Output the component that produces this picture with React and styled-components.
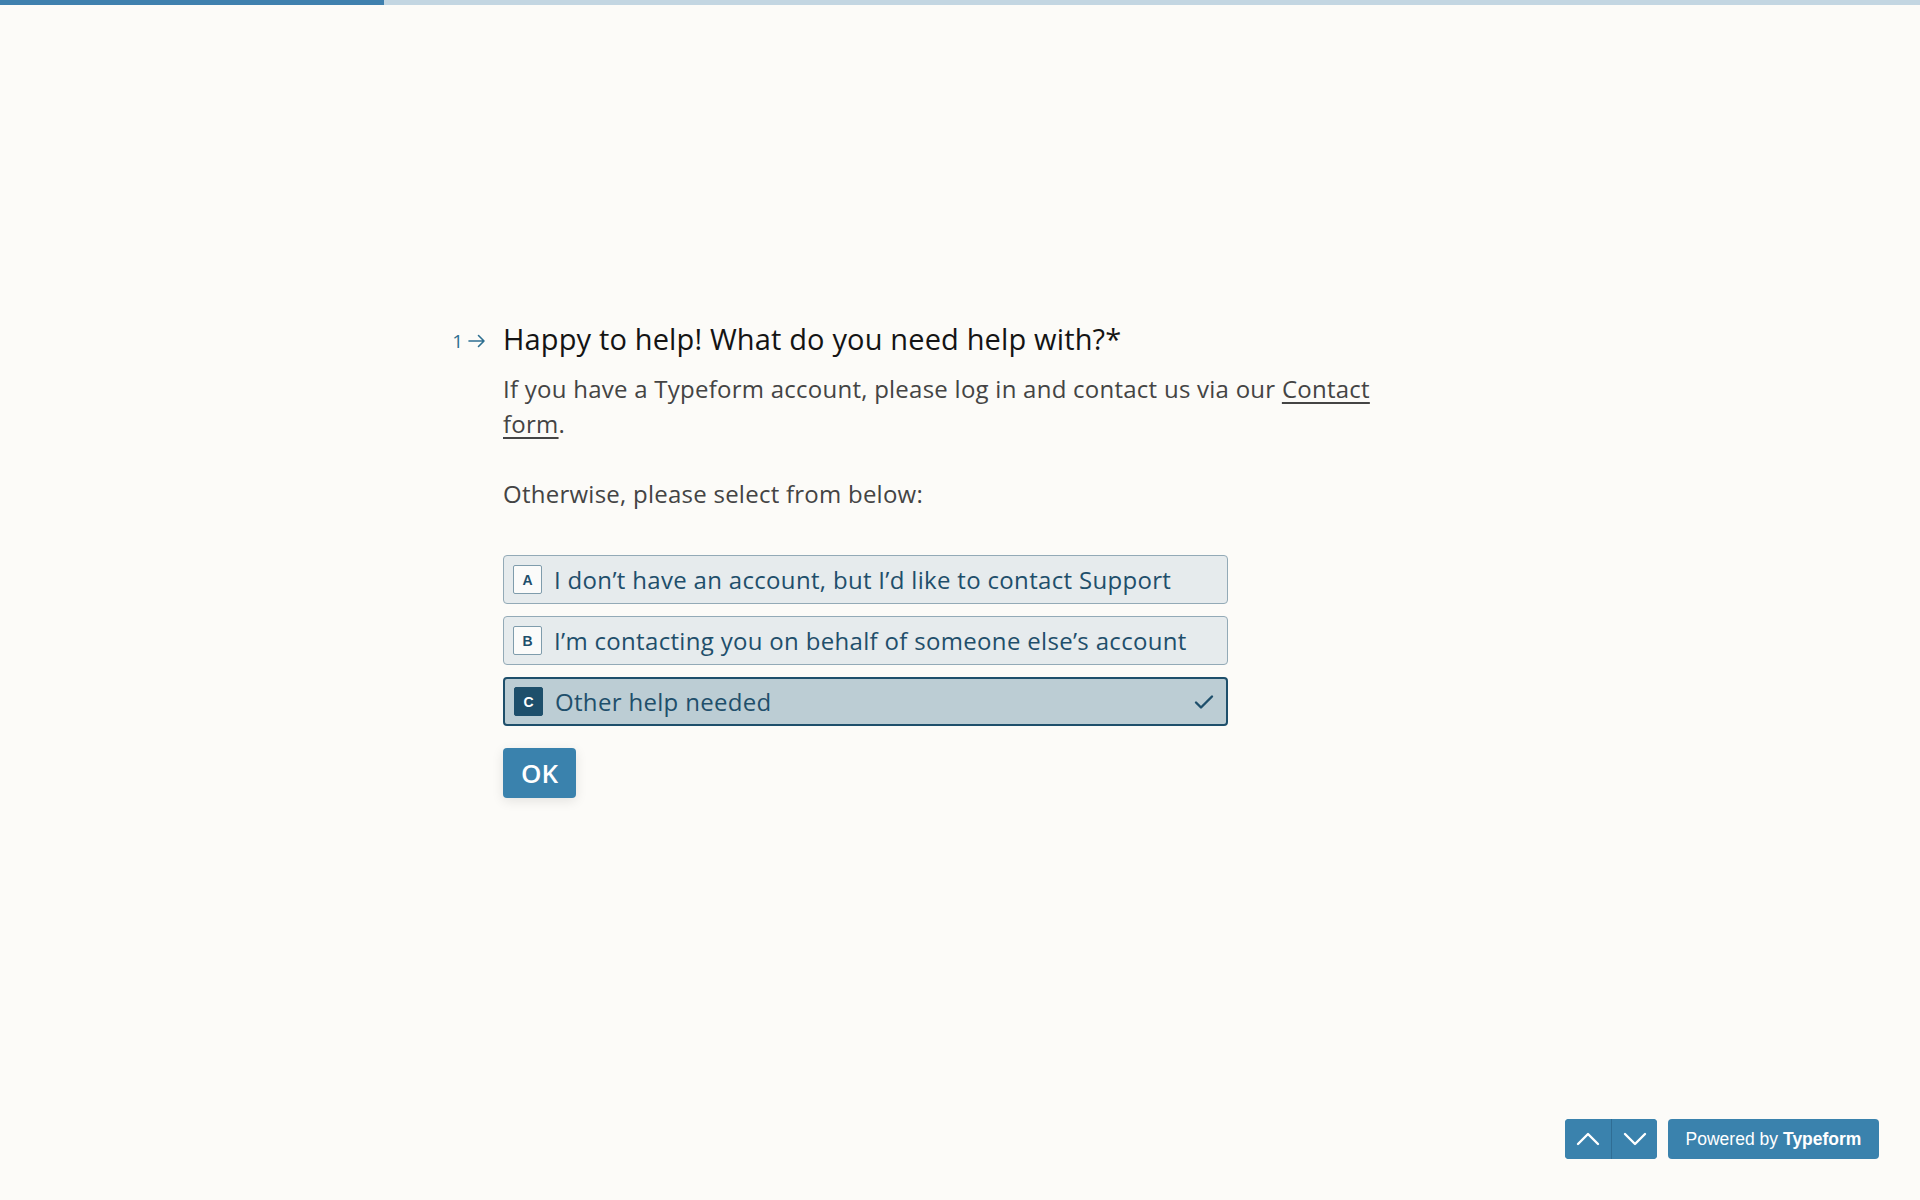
import React from "react";
import styled, { createGlobalStyle } from "styled-components";

const GlobalStyle = createGlobalStyle`
    html, body {
        margin: 0;
        padding: 0;
        background: #fcfbf8;
    }
    body {
        font-family: "Open Sans", "Noto Sans", sans-serif;
        -webkit-font-smoothing: antialiased;
    }
`;

const Page = styled.div`
    position: relative;
    height: 1200px;
    background: #fcfbf8;
    overflow: hidden;
`;

const Progress = styled.div`
    height: 5px;
    background: #c3d6e2;
    display: flex;
`;

const ProgressFill = styled.div`
    height: 100%;
    background: #3f80ae;
`;

const Column = styled.div`
    width: 1016px;
    margin: 0 auto;
    padding-top: 316px;
    display: flex;
    align-items: flex-start;
`;

const Counter = styled.div`
    width: 51px;
    flex-shrink: 0;
    display: flex;
    align-items: center;
    justify-content: flex-end;
    gap: 5px;
    padding-right: 17px;
    box-sizing: border-box;
    height: 36px;
    padding-top: 4px;
    color: #2e6f91;
    font-size: 19px;
`;

const Body = styled.div`
    flex: 1;
    max-width: 900px;
`;

const Title = styled.h1`
    margin: 0;
    font-size: 29px;
    line-height: 36px;
    font-weight: 400;
    color: #141414;
    letter-spacing: 0.15px;
`;

const Description = styled.div`
    margin-top: 14px;
    font-size: 24px;
    line-height: 35px;
    letter-spacing: 0.25px;
    color: #444444;
    p {
        margin: 0;
    }
    a {
        color: #444444;
        text-decoration: underline;
        text-underline-offset: 4px;
        text-decoration-thickness: 1.5px;
    }
`;

const Choices = styled.div`
    margin-top: 44px;
    width: 725px;
    display: flex;
    flex-direction: column;
    gap: 12px;
`;

const Choice = styled.div`
    height: 49px;
    box-sizing: border-box;
    display: flex;
    align-items: center;
    padding: 0 12px 0 9px;
    border-radius: 4px;
    border: ${p => p.selected ? "2px solid #1e4f6b" : "1px solid #93aab7"};
    background: ${p => p.selected ? "#bccdd4" : "#e6ebed"};
    color: #1f4f6b;
    font-size: 24px;
    letter-spacing: 0.32px;
    gap: 12px;
`;

const Key = styled.span`
    width: 29px;
    height: 29px;
    box-sizing: border-box;
    border-radius: 2px;
    display: flex;
    align-items: center;
    justify-content: center;
    font-size: 14px;
    font-weight: 700;
    letter-spacing: 0;
    font-family: "Liberation Sans", Arial, sans-serif;
    border: 1px solid ${p => p.selected ? "#1e4f6b" : "#7f9cac"};
    background: ${p => p.selected ? "#1e4f6b" : "#fbfbfa"};
    color: ${p => p.selected ? "#ffffff" : "#1e4f6b"};
`;

const Label = styled.span`
    flex: 1;
    white-space: nowrap;
`;

const Check = styled.svg`
    width: 20px;
    height: 16px;
`;

const OkButton = styled.button`
    margin-top: 22px;
    width: 73px;
    height: 50px;
    border: none;
    border-radius: 4px;
    background: #3a82ad;
    color: #ffffff;
    font-family: "Open Sans", sans-serif;
    font-size: 26px;
    font-weight: 600;
    box-shadow: 0 3px 12px rgba(0, 0, 0, 0.1);
    cursor: pointer;
`;

const Footer = styled.div`
    position: absolute;
    right: 41px;
    bottom: 41px;
    display: flex;
    gap: 11px;
`;

const NavGroup = styled.div`
    display: flex;
    border-radius: 4px;
    overflow: hidden;
    background: #3a82ad;
`;

const NavButton = styled.button`
    width: 46px;
    height: 40px;
    border: none;
    background: #3a82ad;
    display: flex;
    align-items: center;
    justify-content: center;
    padding: 0;
    & + & {
        border-left: 1px solid #2f6d94;
    }
`;

const Powered = styled.div`
    height: 40px;
    width: 211px;
    box-sizing: border-box;
    border-radius: 4px;
    background: #3a82ad;
    color: #ffffff;
    font-family: "Liberation Sans", Arial, sans-serif;
    font-size: 17.5px;
    display: flex;
    align-items: center;
    justify-content: center;
    b {
        margin-left: 5px;
    }
`;

const choices = [
    { key: "A", label: "I don\u2019t have an account, but I\u2019d like to contact Support" },
    { key: "B", label: "I\u2019m contacting you on behalf of someone else\u2019s account" },
    { key: "C", label: "Other help needed", selected: true },
];

export default function App() {
    return (
        <Page>
            <GlobalStyle />
            <Progress>
                <ProgressFill style={{ width: "20%" }} />
            </Progress>
            <Column>
                <Counter>
                    <span>1</span>
                    <svg width="18" height="14" viewBox="0 0 18 14" fill="none" stroke="#2e6f91" strokeWidth="1.6" strokeLinecap="round" strokeLinejoin="round">
                        <path d="M1 7h15M10.5 1.5L16 7l-5.5 5.5" />
                    </svg>
                </Counter>
                <Body>
                    <Title>Happy to help! What do you need help with?*</Title>
                    <Description>
                        <p>If you have a Typeform account, please log in and contact us via our <a href="#">Contact</a> <a href="#">form</a>.</p>
                        <p>&nbsp;</p>
                        <p>Otherwise, please select from below:</p>
                    </Description>
                    <Choices>
                        {choices.map(c => (
                            <Choice key={c.key} selected={c.selected}>
                                <Key selected={c.selected}>{c.key}</Key>
                                <Label>{c.label}</Label>
                                {c.selected && (
                                    <Check viewBox="0 0 20 16" fill="none" stroke="#1e4f6b" strokeWidth="2.4" strokeLinecap="round" strokeLinejoin="round">
                                        <path d="M2 8.5l5 5L18 2.5" />
                                    </Check>
                                )}
                            </Choice>
                        ))}
                    </Choices>
                    <OkButton>OK</OkButton>
                </Body>
            </Column>
            <Footer>
                <NavGroup>
                    <NavButton>
                        <svg width="24" height="14" viewBox="0 0 24 14" fill="none" stroke="#fff" strokeWidth="2.4" strokeLinecap="round" strokeLinejoin="round">
                            <path d="M2 12L12 2l10 10" />
                        </svg>
                    </NavButton>
                    <NavButton>
                        <svg width="24" height="14" viewBox="0 0 24 14" fill="none" stroke="#fff" strokeWidth="2.4" strokeLinecap="round" strokeLinejoin="round">
                            <path d="M2 2l10 10L22 2" />
                        </svg>
                    </NavButton>
                </NavGroup>
                <Powered>Powered by<b>Typeform</b></Powered>
            </Footer>
        </Page>
    );
}
